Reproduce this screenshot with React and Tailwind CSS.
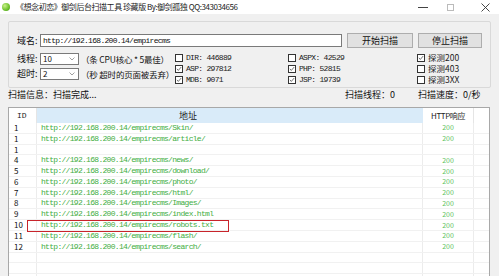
import React from "react";

const CJK = "font-['Noto_Sans_CJK_SC','Noto_Sans',sans-serif]";
const MONO = "font-['Liberation_Mono','Noto_Sans_CJK_SC',monospace]";

function Check({ checked }) {
  return (
    <div className="w-[8px] h-[8px] border border-[#333] bg-white flex items-center justify-center shrink-0">
      {checked && (
        <svg width="8" height="8" viewBox="0 0 8 8" className="block">
          <path d="M1.2 3.8 L3.1 5.9 L6.9 1.4" fill="none" stroke="#333" strokeWidth="0.9" />
        </svg>
      )}
    </div>
  );
}

function CbRow({ checked, label, mono = true }) {
  return (
    <div className="h-[11px] flex items-center">
      <Check checked={checked} />
      <span
        className={`ml-[3px] text-[#222] ${
          mono ? `${MONO} text-[8px] tracking-[-0.7px] leading-[10px]` : `${CJK} text-[8.5px] leading-[9px]`
        } whitespace-nowrap`}
      >
        {label}
      </span>
    </div>
  );
}

function Select({ value }) {
  return (
    <div className="w-[39px] h-[12px] shrink-0 bg-white border border-[#7a7a7a] flex items-center justify-between pl-[2px] pr-[3px]">
      <span className={`${CJK} text-[8px] leading-[10px] text-[#111]`}>{value}</span>
      <svg width="6" height="4" viewBox="0 0 6 4" className="block">
        <path d="M0.5 0.5 L3 3 L5.5 0.5" fill="none" stroke="#888" strokeWidth="0.8" />
      </svg>
    </div>
  );
}

const base = "http://192.168.200.14/empirecms/";
const rows = [
  ["1", base + "Skin/", "200"],
  ["1", base + "article/", "200"],
  ["1", "", ""],
  ["4", base + "news/", "200"],
  ["5", base + "download/", "200"],
  ["6", base + "photo/", "200"],
  ["7", base + "html/", "200"],
  ["8", base + "Images/", "200"],
  ["9", base + "index.html", "200"],
  ["10", base + "robots.txt", "200"],
  ["11", base + "flash/", "200"],
  ["12", base + "search/", "200"],
  ["", "", ""],
  ["", "", ""],
  ["", "", ""],
  ["", "", ""],
];

export default function App() {
  return (
    <div className={`relative w-[499px] h-[276px] bg-[#f0f0f0] overflow-hidden ${CJK}`}>
      {/* Title bar */}
      <div className="h-[14px] bg-white flex items-center">
        <div className="ml-[2px] w-[8px] h-[8px] rounded-full bg-[radial-gradient(circle_at_35%_35%,#c8f08a,#6cc02a_60%,#3f8f18)]" />
        <span className="ml-[6px] text-[8px] tracking-[-0.45px] leading-[12px] text-[#222] whitespace-nowrap">
          《想念初恋》御剑后台扫描工具 珍藏版 By:御剑孤独 QQ:343034656
        </span>
        <div className="ml-auto flex items-center h-full">
          <div className="w-[10px] h-[1px] bg-[#444] mr-[19px]" />
          <div className="w-[7px] h-[7px] border border-[#bbb] mr-[27px]" />
          <svg width="9" height="9" viewBox="0 0 9 9" className="block mr-[9px]">
            <path d="M0.5 0.5 L8.5 8.5 M8.5 0.5 L0.5 8.5" stroke="#333" strokeWidth="0.9" />
          </svg>
        </div>
      </div>

      {/* Group box */}
      <div className="mt-[7px] mx-[8px] h-[67px] border border-[#d9d9d9] rounded-[2px] pt-[11px] pl-[8px]">
        <div className="h-[15px] flex items-center">
          <span className="w-[23px] shrink-0 whitespace-nowrap text-[9px] leading-[12px] text-[#111]">域名:</span>
          <div className="w-[302px] h-[13px] shrink-0 bg-white border border-[#7a7a7a] flex items-center pl-[2px]">
            <span className={`${MONO} text-[8px] tracking-[-0.7px] leading-[10px] text-[#111] whitespace-nowrap`}>
              http://192.168.200.14/empirecms
            </span>
          </div>
          <button className="ml-[5px] w-[66px] h-[15px] shrink-0 bg-[#e1e1e1] border border-[#adadad] text-[9px] leading-[12px] text-[#111] flex items-center justify-center">
            开始扫描
          </button>
          <button className="ml-[5px] w-[64px] h-[15px] shrink-0 bg-[#e1e1e1] border border-[#adadad] text-[9px] leading-[12px] text-[#111] flex items-center justify-center">
            停止扫描
          </button>
        </div>

        <div className="mt-[4px] flex">
          <div className="w-[158px] shrink-0 pt-[1px] flex flex-col gap-[3px]">
            <div className="h-[12px] flex items-center">
              <span className="w-[23px] shrink-0 whitespace-nowrap text-[9px] leading-[12px] text-[#111]">线程:</span>
              <Select value="10" />
              <span className="ml-[2px] text-[8.5px] tracking-[-0.2px] leading-[12px] text-[#111] whitespace-nowrap">（条 CPU核心 * 5最佳）</span>
            </div>
            <div className="h-[12px] flex items-center">
              <span className="w-[23px] shrink-0 whitespace-nowrap text-[9px] leading-[12px] text-[#111]">超时:</span>
              <Select value="2" />
              <span className="ml-[2px] text-[8.5px] tracking-[-0.2px] leading-[12px] text-[#111] whitespace-nowrap">（秒 超时的页面被丢弃）</span>
            </div>
          </div>
          <div className="w-[113px] shrink-0 flex flex-col">
            <CbRow checked={false} label="DIR: 446889" />
            <CbRow checked label="ASP: 297812" />
            <CbRow checked label="MDB: 9071" />
          </div>
          <div className="w-[129px] shrink-0 flex flex-col">
            <CbRow checked={false} label="ASPX: 42529" />
            <CbRow checked label="PHP: 52815" />
            <CbRow checked label="JSP: 19739" />
          </div>
          <div className="flex flex-col">
            <CbRow checked label="探测200" mono={false} />
            <CbRow checked={false} label="探测403" mono={false} />
            <CbRow checked={false} label="探测3XX" mono={false} />
          </div>
        </div>
      </div>

      {/* Status line */}
      <div className="h-[14px] px-[8px] flex items-center text-[9px] leading-[12px] text-[#111] whitespace-nowrap">
        <span>扫描信息：扫描完成...</span>
        <span className="ml-auto w-[73px]">扫描线程：0</span>
        <span className="w-[73px]">扫描速度：0/秒</span>
      </div>

      {/* Table */}
      <div className="mt-[5px] ml-[8px] w-[482px] h-[170px] bg-white border-l border-t border-r border-[#a8a8a8] overflow-hidden">
        <div className="h-[15px] flex">
          <div className="w-[28px] shrink-0 border-r border-[#e5e5e5] flex items-center pl-[8px]">
            <span className={`${MONO} text-[8px] leading-[10px] text-[#222]`}>ID</span>
          </div>
          <div className="w-[386px] shrink-0 bg-[#d9ebf9] flex items-center pl-[142px]">
            <span className="text-[9px] leading-[12px] text-[#222]">地址</span>
          </div>
          <div className="w-[51px] shrink-0 border-r border-[#e5e5e5] flex items-center justify-center">
            <span className="text-[8px] leading-[10px] text-[#222] tracking-[-0.4px] whitespace-nowrap">HTTP响应</span>
          </div>
          <div className="flex-1" />
        </div>
        {rows.map((r, i) => (
          <div key={i} className="h-[10.8px] flex border-b border-[#f1f1f1]">
            <div className="w-[28px] shrink-0 border-r border-[#ececec] flex items-center pl-[5px]">
              <span className="text-[8px] leading-[10px] text-[#111]">{r[0]}</span>
            </div>
            <div className="w-[386px] shrink-0 border-r border-[#ececec] flex items-center pl-[4px]">
              <span className={`${MONO} text-[8px] tracking-[-0.7px] leading-[10px] text-[#3fae3f] whitespace-nowrap`}>
                {r[1]}
              </span>
            </div>
            <div className="w-[51px] shrink-0 border-r border-[#ececec] flex items-center justify-center">
              <span className="text-[7px] leading-[9px] text-[#5dc25d]">{r[2]}</span>
            </div>
            <div className="flex-1" />
          </div>
        ))}
      </div>

      {/* Red annotation box */}
      <div className="absolute left-[27px] top-[220px] w-[202px] h-[12px] border-[1.5px] border-[#c8242b]" />
    </div>
  );
}
